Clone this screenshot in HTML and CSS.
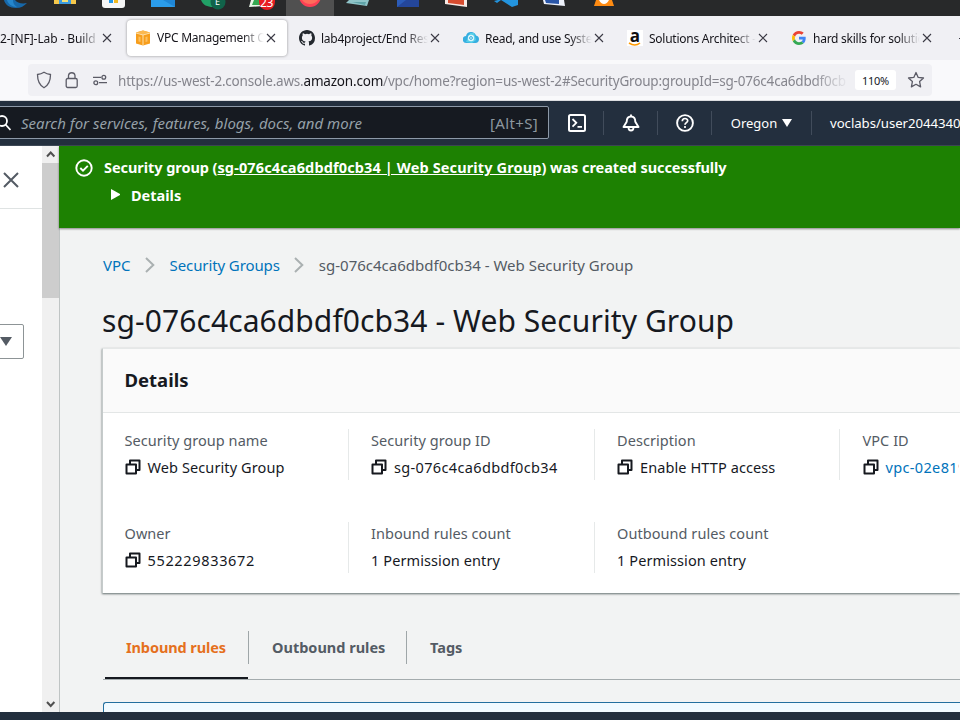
FILE: index.html
```
<!DOCTYPE html>
<html lang="en">
<head>
<meta charset="utf-8">
<title>VPC Management Console</title>
<link rel="stylesheet" href="styles.css">
</head>
<body>
<svg width="0" height="0" class="defs">
  <symbol id="x" viewBox="0 0 10 10"><path d="M1 1l8 8M9 1L1 9" fill="none" stroke="currentColor" stroke-width="1.1"/></symbol>
  <symbol id="copy" viewBox="0 0 16 16"><path d="M1.500 5.500h9.500v9h-9.500zM5 5.500V1.500h9.500v9.500h-3.500" fill="none" stroke="#16191f" stroke-width="2" stroke-linejoin="round"/></symbol>
  <symbol id="chev" viewBox="0 0 10 16"><path d="M1 1l7.3 7L1 15" fill="none" stroke="#aab0b1" stroke-width="2"/></symbol>
</svg>
<div class="taskbar">
  <svg width="960" height="16" viewBox="0 0 960 16">
    <rect x="286" width="48" height="16" fill="#505050"/>
    <path d="M4 0c1 5 6 8 12 8 5 0 8-2 11-5-5 1-10 0-12-3z" fill="#1767a8"/><path d="M7 0c1 4 5 7 10 7-3-2-4-4-4-7z" fill="#2586cc"/>
    <path d="M54 0h22v4H54z" fill="#f5c84b"/><path d="M59 0h12v4H59z" fill="#3b9be0"/><path d="M62 0h6v2h-6z" fill="#f5e27a"/>
    <path d="M102 0h23v5q0 3-3 3h-17q-3 0-3-3z" fill="#f6f6f6"/><path d="M109 0h4v3h-4z" fill="#2298e8"/><path d="M114 0h4v3h-4z" fill="#f2b91f"/>
    <path d="M151 0h24v7h-24z" fill="#2b9cea"/><path d="M163 0h12v7z" fill="#1f86d6"/>
    <path d="M201 0c2 5 6 7 12 7V0z" fill="#21a066"/><circle cx="218" cy="2" r="7.5" fill="#11634a"/>
    <path d="M249 7l2-7h13v6z" fill="#e9f6e9"/><path d="M252 5l2-5h10v5z" fill="#35a852"/><rect x="259" y="-8" width="16" height="18" rx="8" fill="#e81c22"/>
    <circle cx="310" cy="-4" r="11" fill="#ff4055"/><path d="M302 0h16q-3 4-8 4t-8-4z" fill="#ff6d5b"/>
    <path d="M346 3l3-3h20l-2 6z" fill="#8fc4c8"/><path d="M352 2h14l-1 3z" fill="#5fa3a8"/>
    <path d="M397 0h22v7h-22z" fill="#24469a"/><path d="M397 7l9-7h-9z" fill="#2c5cb8"/>
    <path d="M445 0h22v7l-22-3z" fill="#f8e9e5"/><path d="M448 0h16v5l-16-2z" fill="#d84c2f"/>
    <path d="M494 1l4-1h20v5l-6 2-11-7-4 3z" fill="#2394de"/>
    <path d="M543 0h21l1 6-21-2z" fill="#eef2fb"/><path d="M545 0h14v4l-13-1z" fill="#2a56a8"/>
    <path d="M596 0h16l2 6h-20z" fill="#ff8b12"/><path d="M599 0h10q-2 4-5 4t-5-4z" fill="#fff"/>
  </svg>
  <span class="badge-e">E</span><span class="badge-n">23</span>
</div>
<div class="tabs">
  <div class="tab"><span class="fav"></span><span class="ttl first">2-[NF]-Lab - Build</span><svg class="cls"><use href="#x"/></svg></div>
  <div class="tab active"><svg class="fav" viewBox="0 0 16 16"><path d="M1 2.500l7-2 7 2v11l-7 2-7-2z" fill="#f79e1c"/><path d="M1 2.500l7-2 7 2-7 2z" fill="#fbb950"/><path d="M8 4.500v11M1 3l7 2 7-2" stroke="#fde0ac" fill="none"/><path d="M3.500 6.500l2 .5v5l-2-.5zM12.500 6.500l-2 .5v5l2-.5z" fill="#fbc062"/></svg><span class="ttl">VPC Management Co</span><svg class="cls"><use href="#x"/></svg></div>
  <div class="tab"><svg class="fav" viewBox="0 0 16 16"><path fill="#24292f" d="M8 0C3.58 0 0 3.58 0 8c0 3.54 2.29 6.53 5.470 7.590.4.070.55-.17.55-.38 0-.19-.01-.82-.01-1.490-2.010.37-2.530-.49-2.690-.94-.09-.23-.48-.94-.82-1.130-.28-.15-.68-.52-.01-.53.63-.01 1.080.58 1.230.82.72 1.210 1.870.87 2.330.66.07-.52.28-.87.51-1.070-1.780-.2-3.640-.89-3.640-3.950 0-.87.31-1.590.82-2.150-.08-.2-.36-1.020.08-2.120 0 0 .67-.21 2.200.82a7.600 7.600 0 0 1 4 0c1.530-1.040 2.200-.82 2.200-.82.44 1.100.16 1.920.08 2.120.51.56.82 1.270.82 2.150 0 3.070-1.870 3.750-3.650 3.950.29.25.54.73.54 1.480 0 1.070-.01 1.930-.01 2.200 0 .21.15.46.55.38A8 8 0 0 0 16 8c0-4.420-3.580-8-8-8z"/></svg><span class="ttl">lab4project/End Resu</span><svg class="cls"><use href="#x"/></svg></div>
  <div class="tab"><svg class="fav" viewBox="0 0 16 16"><path d="M3.500 13a3.500 3.500 0 0 1-.5-7 5.200 5.200 0 0 1 10-.5A3.800 3.800 0 0 1 12.500 13z" fill="#35aee0"/><path d="M3 12l4-9h4l2 7-4 3z" fill="#57cfe8"/><circle cx="8" cy="8" r="3.200" fill="#d9f6fb"/><circle cx="8" cy="8" r="1.400" fill="none" stroke="#35aee0"/></svg><span class="ttl">Read, and use System</span><svg class="cls"><use href="#x"/></svg></div>
  <div class="tab"><span class="fav amazon">a<svg viewBox="0 0 16 5"><path d="M2 1q6 4 11 0" fill="none" stroke="#ff9900" stroke-width="1.600"/></svg></span><span class="ttl">Solutions Architect -</span><svg class="cls"><use href="#x"/></svg></div>
  <div class="tab"><svg class="fav google" viewBox="0 0 48 48"><path fill="#EA4335" d="M24 9.500c3.540 0 6.710 1.220 9.210 3.600l6.850-6.850C35.900 2.380 30.470 0 24 0 14.620 0 6.510 5.380 2.560 13.220l7.980 6.190C12.430 13.720 17.740 9.500 24 9.500z"/><path fill="#4285F4" d="M46.980 24.550c0-1.570-.15-3.090-.38-4.550H24v9.020h12.940c-.58 2.960-2.260 5.480-4.780 7.180l7.730 6c4.510-4.180 7.090-10.360 7.090-17.650z"/><path fill="#FBBC05" d="M10.530 28.590A14.500 14.500 0 0 1 9.770 24c0-1.600.27-3.140.76-4.590l-7.980-6.190A23.900 23.900 0 0 0 0 24c0 3.880.92 7.540 2.560 10.780z"/><path fill="#34A853" d="M24 48c6.480 0 11.930-2.130 15.890-5.810l-7.730-6c-2.150 1.450-4.920 2.300-8.160 2.300-6.260 0-11.570-4.220-13.470-9.910l-7.980 6.190C6.510 42.620 14.620 48 24 48z"/></svg><span class="ttl">hard skills for solutio</span><svg class="cls"><use href="#x"/></svg></div>
  <div class="tab last"><svg width="10" height="10"><path d="M0 5.500h9M4.500 1v9" stroke="#3a3944"/></svg></div>
</div>
<div class="toolbar">
  <div class="url">
    <svg class="shield" width="16" height="18" viewBox="0 0 16 18"><path d="M8 1.200c2 1.300 4 2 6.500 2.300 0 6-1.500 10.500-6.500 13.200C3 14 1.500 9.500 1.500 3.500 4 3.200 6 2.500 8 1.200z" fill="none" stroke="#5b5b66" stroke-width="1.300"/></svg>
    <svg class="lock" width="14" height="18" viewBox="0 0 14 18"><rect x="1.200" y="7.500" width="11" height="9" rx="1.500" fill="none" stroke="#5b5b66" stroke-width="1.300"/><path d="M3.500 7V4.500a3.300 3.300 0 0 1 6.500 0V7" fill="none" stroke="#5b5b66" stroke-width="1.300"/></svg>
    <svg class="perm" width="16" height="12" viewBox="0 0 16 12"><g fill="none" stroke="#5b5b66" stroke-width="1.300"><path d="M1 3.300h8M7 8.700h8"/><circle cx="11.800" cy="3.200" r="1.900"/><circle cx="3.800" cy="8.700" r="1.900"/></g></svg>
    <span class="addr">https://us-west-2.console.aws.<b>amazon.com</b>/vpc/home?region=us-west-2#SecurityGroup:groupId=sg-076c4ca6dbdf0cb</span>
    <span class="zoom">110%</span>
    <svg class="star" width="18" height="18" viewBox="0 0 18 18"><path d="M9 1.500l2.200 4.900 5.300.6-3.900 3.600 1 5.300L9 13.300l-4.600 2.600 1-5.300L1.500 7l5.300-.6z" fill="none" stroke="#5b5b66" stroke-width="1.300" stroke-linejoin="round"/></svg>
  </div>
</div>
<div class="awsnav">
  <div class="search">
    <svg width="16" height="18" viewBox="0 0 16 18"><circle cx="7" cy="7" r="5" fill="none" stroke="#fff" stroke-width="1.800"/><path d="M10.500 10.500l5 5.500" stroke="#fff" stroke-width="1.800"/></svg>
    <span class="ph">Search for services, features, blogs, docs, and more</span><span class="key">[Alt+S]</span>
  </div>
  <div class="ni shell"><svg width="18" height="18" viewBox="0 0 18 18"><rect x="1" y="1" width="16" height="16" rx="1.500" fill="none" stroke="#fff" stroke-width="2"/><path d="M4.500 5l3.800 3.800-3.800 3.800M9.500 12.800h4.500" fill="none" stroke="#fff" stroke-width="1.800"/></svg></div>
  <div class="ni"><svg width="18" height="18" viewBox="0 0 18 18"><path d="M9 .5v2M9 2.500c-3 0-4.300 2-4.300 5.200L1.500 13h15l-3.200-5.300C13.300 4.500 12 2.500 9 2.500z" fill="none" stroke="#fff" stroke-width="1.900" stroke-linejoin="round"/><path d="M6.500 13.500a2.500 3 0 0 0 5 0" fill="none" stroke="#fff" stroke-width="1.800"/></svg></div>
  <div class="ni"><svg width="18" height="18" viewBox="0 0 18 18"><circle cx="9" cy="9" r="7.900" fill="none" stroke="#fff" stroke-width="1.900"/><path d="M6.300 7.200c0-3.600 5.400-3.400 5.400-.4 0 1.700-2.700 1.900-2.700 3.900M9 12v2" fill="none" stroke="#fff" stroke-width="1.700"/></svg></div>
  <div class="ni region"><span>Oregon</span><i class="tri"></i></div>
  <div class="ni user"><span>voclabs/user2044340</span></div>
</div>
<div class="main">
  <div class="side">
    <div class="sidetop"><svg width="16" height="16"><path d="M1 1l14 14M15 1L1 15" stroke="#545b64" stroke-width="2"/></svg></div>
    <div class="select"><i class="tri"></i></div>
  </div>
  <div class="scroll">
    <svg width="17" height="17"><path d="M5 10.500l3.700-4 3.700 4" fill="none" stroke="#505050" stroke-width="2"/></svg>
    <div class="thumb"></div>
    <svg width="17" height="18"><path d="M5 8l3.700 4 3.700-4" fill="none" stroke="#505050" stroke-width="2"/></svg>
  </div>
  <div class="content">
    <div class="flash">
      <svg width="18" height="18" viewBox="0 0 18 18"><circle cx="9" cy="9" r="7.700" fill="none" stroke="#fff" stroke-width="1.900"/><path d="M5.300 9l2.700 2.700 4.800-4.900" fill="none" stroke="#fff" stroke-width="1.900"/></svg>
      <div class="flashbody"><div class="msg">Security group (<u>sg-076c4ca6dbdf0cb34 | Web Security Group</u>) was created successfully</div>
      <div class="more"><i class="play"></i><span>Details</span></div></div>
    </div>
    <div class="page">
      <div class="crumbs"><a>VPC</a><svg><use href="#chev"/></svg><a>Security Groups</a><svg><use href="#chev"/></svg><span>sg-076c4ca6dbdf0cb34 - Web Security Group</span></div>
      <h1>sg-076c4ca6dbdf0cb34 - Web Security Group</h1>
      <div class="card">
        <h2>Details</h2>
        <div class="grid">
          <div class="cell"><div class="lb">Security group name</div><div class="val"><svg><use href="#copy"/></svg><span>Web Security Group</span></div></div>
          <div class="cell"><div class="lb">Security group ID</div><div class="val"><svg><use href="#copy"/></svg><span class="id">sg-076c4ca6dbdf0cb34</span></div></div>
          <div class="cell"><div class="lb">Description</div><div class="val"><svg><use href="#copy"/></svg><span>Enable HTTP access</span></div></div>
          <div class="cell"><div class="lb">VPC ID</div><div class="val"><svg><use href="#copy"/></svg><a class="id">vpc-02e819</a></div></div>
          <div class="cell"><div class="lb">Owner</div><div class="val"><svg><use href="#copy"/></svg><span class="num">552229833672</span></div></div>
          <div class="cell"><div class="lb">Inbound rules count</div><div class="val"><span>1 Permission entry</span></div></div>
          <div class="cell"><div class="lb">Outbound rules count</div><div class="val"><span>1 Permission entry</span></div></div>
        </div>
      </div>
      <div class="subtabs"><div class="st on"><span>Inbound rules</span></div><div class="st out"><span>Outbound rules</span></div><div class="st"><span>Tags</span></div></div>
      <div class="info"></div>
    </div>
  </div>
</div>
<div class="bottom"></div>
</body>
</html>
```
FILE: styles.css
```
* { box-sizing: border-box; }
body { margin: 0; width: 960px; height: 720px; overflow: hidden; display: flex; flex-direction: column; font-family: "Noto Sans", "Open Sans", sans-serif; color: #16191f; white-space: nowrap; }
svg { display: block; flex: none; }
.defs { position: absolute; }
.taskbar { height: 16px; background: #28292a; position: relative; overflow: hidden; flex: none; }
.badge-e, .badge-n { position: absolute; color: #fff; line-height: 12px; }
.badge-e { left: 215px; top: -4px; font-size: 9px; }
.badge-n { left: 260px; top: -3px; font-size: 12px; letter-spacing: -.3px; }

.tabs { height: 44px; flex: none; background: #f0f0f4; display: flex; padding-top: 3px; margin-left: -39px; width: 999px; overflow: hidden; }
.tab { width: 164px; height: 38px; flex: none; display: flex; align-items: center; padding-left: 10px; font-size: 12px; color: #15141a; }
.tab.active { width: 160px; height: 36px; margin: 1px 2px 0; padding: 0 0 1px 8px; background: #fff; border-radius: 4px; box-shadow: 0 0 3px rgba(0,0,0,.4); }
.tab.last { width: 54px; padding-left: 14px; }
.fav { width: 16px; height: 16px; flex: none; margin-right: 6px; }
.google { width: 14px; height: 14px; margin: 0 7px 0 1px; }
.amazon { font: bold 17px/12px "Open Sans", sans-serif; text-align: center; background: #fff; color: #111; }
.amazon svg { width: 16px; height: 5px; }
.ttl { width: 109px; flex: none; overflow: hidden; letter-spacing: -.25px; -webkit-mask-image: linear-gradient(90deg, #000 78%, transparent 98%); mask-image: linear-gradient(90deg, #000 78%, transparent 98%); }
.first { margin-left: 7px; width: 102px; letter-spacing: -.1px; }
.cls { width: 10px; height: 10px; color: #3a3944; }

.toolbar { height: 41px; flex: none; background: #f9f9fb; border-bottom: 1px solid #dcdde0; padding: 4px 28px 0; }
.url { height: 32px; background: #f0f0f4; border-radius: 4px; display: flex; align-items: center; padding-left: 8px; }
.lock { margin-left: 13px; }
.perm { margin-left: 13px; }
.addr { margin-left: 10px; padding-top: 2px; width: 731px; overflow: hidden; font-size: 13.500px; letter-spacing: -.2px; color: #85858d; -webkit-mask-image: linear-gradient(90deg, #000 95%, transparent); mask-image: linear-gradient(90deg, #000 95%, transparent); }
.addr b { font-weight: 400; color: #15141a; }
.zoom { margin-left: 6px; width: 41px; height: 20px; background: #fff; border-radius: 3px; font-size: 11px; letter-spacing: -.3px; line-height: 21px; text-align: center; }
.star { margin-left: 11px; }

.awsnav { height: 45px; flex: none; background: #232f3e; display: flex; align-items: center; color: #fff; border-bottom: 1px solid #3d4856; }
.search { width: 559px; flex: none; margin: -1px 0 0 -10px; height: 33px; background: #161a21; border: 1px solid #8d99a8; border-radius: 2px; display: flex; align-items: center; padding-left: 4px; }
.ph { margin-left: 10px; width: 469px; font-size: 15px; letter-spacing: .03px; font-style: italic; color: #95a0a8; }
.key { font-size: 15px; letter-spacing: .35px; color: #8d979f; }
.ni { height: 24px; width: 54px; flex: none; border-right: 1px solid #414c5b; display: flex; align-items: center; justify-content: center; font-size: 13.200px; }
.ni.shell { width: 55px; padding-left: 1px; }
.tri { display: block; border: 5px solid transparent; border-top: 8px solid #fff; border-bottom: 0; }
.region { width: 100px; font-size: 13px; }
.region .tri { margin-left: 5px; }
.user { border: 0; width: 148px; padding-left: 18px; justify-content: flex-start; letter-spacing: -.04px; }

.main { height: 566px; flex: none; display: flex; }
.side { width: 42px; flex: none; background: #fff; }
.sidetop { height: 63px; border-bottom: 1px solid #dfe3e3; padding: 26px 0 0 3px; }
.select { margin: 115px 0 0 -12px; width: 36px; height: 35px; border: 1px solid #8d9496; border-radius: 2px; padding: 12px 0 0 11px; }
.select .tri { width: 12px; border-width: 9px 6px 0; border-top-color: #545b64; }
.scroll { width: 17px; flex: none; background: #f0f0f0; display: flex; flex-direction: column; }
.thumb { height: 135px; background: #cdcdcd; margin-bottom: auto; }
.content { flex: 1; min-width: 0; background: #f2f3f3; border-left: 1px solid #bfc4c4; }
.flash { height: 82px; background: #1d8102; margin-left: -1px; color: #fff; font-weight: 700; display: flex; padding: 13px 0 0 16px; font-size: 14.500px; box-shadow: 0 1px 2px rgba(0,0,0,.45); }
.flashbody { margin-left: 10px; margin-top: -4px; }
.msg { letter-spacing: -.06px; padding-left: 1px; }
.msg u { letter-spacing: .13px; }
.msg, .more { line-height: 24px; height: 28px; }
.more { display: flex; }
.play { border: 5.500px solid transparent; border-left: 9px solid #fff; border-right: 0; height: 11px; margin: 6px 11px 0 8px; }
.page { padding-left: 42px; }
.crumbs { display: flex; align-items: center; height: 24px; margin-top: 25px; padding-left: 1px; font-size: 15px; color: #545b64; }
.crumbs svg { width: 10px; height: 16px; margin: 0 14.500px; }
.crumbs a:nth-of-type(2) { letter-spacing: -.1px; }
a { color: #0073bb; }
h1 { margin: 21px 0 0; height: 44px; line-height: 45px; font-size: 30px; font-weight: 400; letter-spacing: .08px; }
.card { margin-top: 6px; height: 245px; background: #fff; border-left: 1px solid #c5cbcb; border-top: 1px solid #e5e8e8; box-shadow: 0 1px 2px rgba(0,20,20,.6); }
h2 { margin: 0; height: 64px; line-height: 61px; padding-left: 21.500px; background: #fafafa; border-bottom: 1px solid #e3e6e6; font-size: 18.500px; }
.grid { display: grid; grid-template-columns: 245.500px 246px 245.500px 120px; grid-auto-rows: 51px; row-gap: 42px; padding-top: 16px; margin-left: -1px; overflow: hidden; }
.cell { padding-left: 22.500px; border-left: 1px solid #e6e9e9; font-size: 14.500px; letter-spacing: .1px; overflow: hidden; }
.cell:nth-child(4n+1) { border-left-color: transparent; padding-left: 21.500px; }
.lb { color: #545b64; line-height: 24px; margin-top: -1px; letter-spacing: .06px; }
.val { line-height: 24px; margin-top: 3px; display: flex; align-items: center; }
.val svg { width: 16px; height: 16px; margin-right: 7px; }
.id { letter-spacing: .35px; }
.num { letter-spacing: .66px; }
.subtabs { display: flex; height: 60px; margin-top: 27px; border-bottom: 1px solid #a4abad; margin-left: 1px; }
.st { position: relative; line-height: 55px; padding: 0 24px; color: #545b64; font-weight: 700; font-size: 14.500px; }
.st:not(:last-child)::after { content: ""; position: absolute; right: -1px; top: 11px; height: 33px; border-right: 1px solid #9fa6a8; }
.st.on { width: 145px; padding-left: 23px; letter-spacing: -.1px; color: #e5701d; }
.st.on::before { content: ""; position: absolute; left: 2px; right: 0; bottom: 0; height: 2px; background: #16191f; }
.out { width: 158px; }
.info { margin: 22px 0 0 1px; height: 10px; background: #f1faff; border: 1px solid #236f9f; border-right: 0; border-bottom: 0; border-radius: 3px 0 0 0; }
.bottom { height: 8px; background: #232f3e; flex: none; position: relative; }
```
